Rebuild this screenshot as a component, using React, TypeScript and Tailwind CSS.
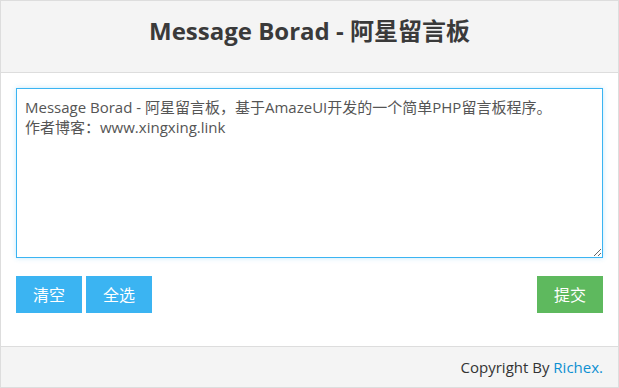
const FONT = '"Open Sans", "Noto Sans CJK SC", sans-serif'

export default function App() {
  return (
    <div className="w-[619px] h-[388px] border border-[#ddd] flex flex-col text-[#333]" style={{ fontFamily: FONT }}>
      <div className="h-[72px] shrink-0 bg-[#f4f4f4] border-b border-[#ddd] pt-[14px] text-center">
        <h1 className="text-[24px] leading-[32px] font-bold text-[#3a3a3a]">Message Borad - 阿星留言板</h1>
      </div>

      <div className="flex-1 bg-white px-[15px] pt-[15px]">
        <textarea
          className="block w-full h-[170px] border border-[#3bb4f2] px-[8px] pt-[8px] pb-[5px] text-[15px] leading-[20px] text-[#555] outline-none resize-y shadow-[0_0_5px_rgba(59,180,242,0.3)]"
          defaultValue={'Message Borad - 阿星留言板，基于AmazeUI开发的一个简单PHP留言板程序。\n作者博客：www.xingxing.link'}
        />
        <div className="flex justify-between mt-[18px]">
          <div className="flex gap-[4px]">
            <button className="w-[66px] h-[37px] bg-[#3bb4f2] border border-[#3bb4f2] text-white text-[16px]">清空</button>
            <button className="w-[66px] h-[37px] bg-[#3bb4f2] border border-[#3bb4f2] text-white text-[16px]">全选</button>
          </div>
          <button className="w-[66px] h-[37px] bg-[#5eb95e] border border-[#5eb95e] text-white text-[16px]">提交</button>
        </div>
      </div>

      <div className="h-[41px] shrink-0 bg-[#f4f4f4] border-t border-[#ddd] flex items-center justify-end pr-[15px] text-[15px]">
        Copyright By&nbsp;<a className="text-[#0e90d2]">Richex.</a>
      </div>
    </div>
  )
}
